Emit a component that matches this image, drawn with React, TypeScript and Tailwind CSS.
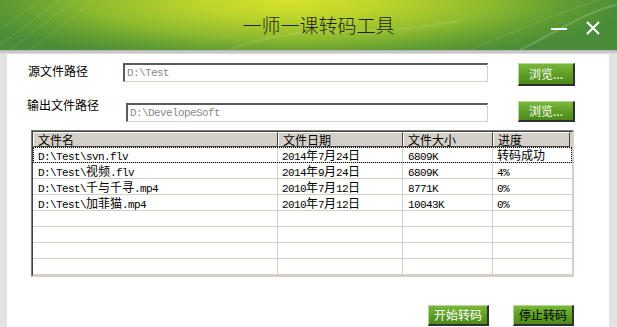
import React from 'react';

const CJK = /([\u4e00-\u9fff]+)/;

// SimSun-like mix: half-width latin, full-width hanzi
const Mixed = ({ text }: { text: string }) => {
  const parts = text.split(CJK).filter(Boolean);
  return (
    <>
      {parts.map((p, i) =>
        CJK.test(p) ? (
          <span key={i} className="font-['Noto_Sans_CJK_SC',sans-serif] text-[12px] tracking-normal">
            {p}
          </span>
        ) : (
          <span key={i} className="font-['Liberation_Mono',monospace] text-[11px] tracking-[-0.6px]">
            {p}
          </span>
        )
      )}
    </>
  );
};

const files = [
  { name: 'D:\\Test\\svn.flv', date: '2014年7月24日', size: '6809K', progress: '转码成功' },
  { name: 'D:\\Test\\视频.flv', date: '2014年9月24日', size: '6809K', progress: '4%' },
  { name: 'D:\\Test\\千与千寻.mp4', date: '2010年7月12日', size: '8771K', progress: '0%' },
  { name: 'D:\\Test\\加菲猫.mp4', date: '2010年7月12日', size: '10043K', progress: '0%' },
];

const columns = ['文件名', '文件日期', '文件大小', '进度'];

const GreenButton = ({ label, dark, className }: { label: string; dark?: boolean; className: string }) => (
  <button
    className={`${className} flex items-center justify-center border border-t-[#b9d79a] border-l-[#b9d79a] border-r-2 border-b-2 border-r-[#303030] border-b-[#303030] bg-[linear-gradient(#7ab83a,#5c9c24_55%,#4b8a1a)] font-['Noto_Sans_CJK_SC',sans-serif] text-[12px] leading-none ${
      dark ? 'text-black' : 'text-white'
    }`}
  >
    {label}
  </button>
);

const PathInput = ({ value, className }: { value: string; className: string }) => (
  <div
    className={`${className} flex items-center border-t-2 border-l-2 border-r border-b border-t-[#5a5a5a] border-l-[#5a5a5a] border-r-[#d4d0c8] border-b-[#d4d0c8] bg-white pl-[2px] text-[#8a8a8a]`}
  >
    <span className="font-['Liberation_Mono',monospace] text-[11px] tracking-[-0.6px]">{value}</span>
  </div>
);

export default function App() {
  const blanks = 4;

  return (
    <div className="w-[617px] h-[327px] overflow-hidden flex flex-col bg-[#e4e4e4]">
      {/* title bar */}
      <header className="relative h-[50px] shrink-0 grid grid-cols-[1fr_auto_1fr] items-center bg-[radial-gradient(ellipse_55%_130%_at_47%_0%,#d8e22a_0%,#bcd42c_28%,#8fbb2e_58%,#5f9c32_82%,#4a8c38_100%)]">
        <svg className="absolute inset-0 pointer-events-none" width="617" height="50" viewBox="0 0 617 50">
          <g stroke="#ffffff" strokeOpacity="0.12" fill="none">
            <path d="M0 30 L40 0 M0 45 L60 0 M10 50 L75 0 M30 50 L95 0" />
            <path d="M520 50 C560 30 590 10 617 5" strokeOpacity="0.18" strokeWidth="2" />
            <path d="M470 50 C530 25 580 5 600 0" />
            <path d="M230 50 C300 20 380 40 460 20" strokeOpacity="0.08" strokeWidth="3" />
          </g>
        </svg>
        <div />
        <h1 className="relative pl-[20px] pb-[2px] font-['Noto_Sans_CJK_SC',sans-serif] font-light text-[19px] text-[#1e1e1e] leading-none">
          一师一课转码工具
        </h1>
        <div className="relative flex justify-end items-center gap-[19px] pr-[17px] mt-[6px]">
          <svg width="16" height="14" viewBox="0 0 16 14">
            <path d="M0 8 H16" stroke="#fff" strokeWidth="2" />
          </svg>
          <svg width="14" height="14" viewBox="0 0 14 14">
            <path d="M1 1 L13 13 M13 1 L1 13" stroke="#fff" strokeWidth="2" />
          </svg>
        </div>
      </header>
      <div className="h-[4px] shrink-0 bg-[linear-gradient(#b4b4b4,#dcdcdc)]" />

      <main className="flex-1 ml-[7px] mr-[8px] bg-white flex flex-col font-['Noto_Sans_CJK_SC',sans-serif] text-[12px] text-black">
        {/* source path */}
        <div className="flex items-start mt-[9px] pl-[21px]">
          <span className="w-[95px] leading-[16px]">源文件路径</span>
          <PathInput value="D:\Test" className="w-[365px] h-[19px]" />
          <GreenButton label="浏览..." className="ml-[30px] w-[57px] h-[23px]" />
        </div>

        {/* output path */}
        <div className="flex items-start mt-[15px] pl-[20px]">
          <span className="w-[99px] -mt-[4px] leading-[16px]">输出文件路径</span>
          <PathInput value="D:\DevelopeSoft" className="w-[362px] h-[19px] mt-[2px]" />
          <GreenButton label="浏览..." className="ml-[30px] w-[57px] h-[21px]" />
        </div>

        {/* file list */}
        <div className="mt-[8px] ml-[24px] w-[543px] h-[147px] border border-t-[#808080] border-l-[#808080] border-r-[#d4d0c8] border-b-[#d4d0c8]">
          <div className="h-full border border-t-[#404040] border-l-[#404040] border-r-[#d4d0c8] border-b-[#d4d0c8] flex flex-col">
            <div className="grid grid-cols-[245px_125px_90px_77px] h-[15px] bg-[#d4d0c8]">
              {columns.map((c) => (
                <div
                  key={c}
                  className="border-t border-l border-t-white border-l-white border-r border-b border-r-[#404040] border-b-[#404040] pl-[4px] leading-[13px]"
                >
                  {c}
                </div>
              ))}
            </div>
            {files.map((f, i) => (
              <div
                key={f.name}
                className={`grid grid-cols-[245px_125px_90px_79px] h-[16px] border-b border-[#d4d0c8] leading-[15px] ${
                  i === 0 ? 'outline outline-1 outline-dotted outline-offset-[-1px] outline-black' : ''
                }`}
              >
                <div className="pl-[5px] border-r border-[#d4d0c8] whitespace-nowrap"><Mixed text={f.name} /></div>
                <div className="pl-[4px] border-r border-[#d4d0c8] whitespace-nowrap"><Mixed text={f.date} /></div>
                <div className="pl-[5px] border-r border-[#d4d0c8] whitespace-nowrap"><Mixed text={f.size} /></div>
                <div className="pl-[4px] whitespace-nowrap"><Mixed text={f.progress} /></div>
              </div>
            ))}
            {Array.from({ length: blanks }).map((_, i) => (
              <div key={i} className="grid grid-cols-[245px_125px_90px_79px] h-[16px] border-b border-[#d4d0c8]">
                <div className="border-r border-[#d4d0c8]" />
                <div className="border-r border-[#d4d0c8]" />
                <div className="border-r border-[#d4d0c8]" />
                <div />
              </div>
            ))}
          </div>
        </div>

        {/* actions */}
        <div className="flex justify-end gap-[24px] mt-[28px] pr-[35px]">
          <GreenButton label="开始转码" className="w-[61px] h-[21px]" />
          <GreenButton label="停止转码" dark className="w-[61px] h-[21px]" />
        </div>
      </main>
    </div>
  );
}
